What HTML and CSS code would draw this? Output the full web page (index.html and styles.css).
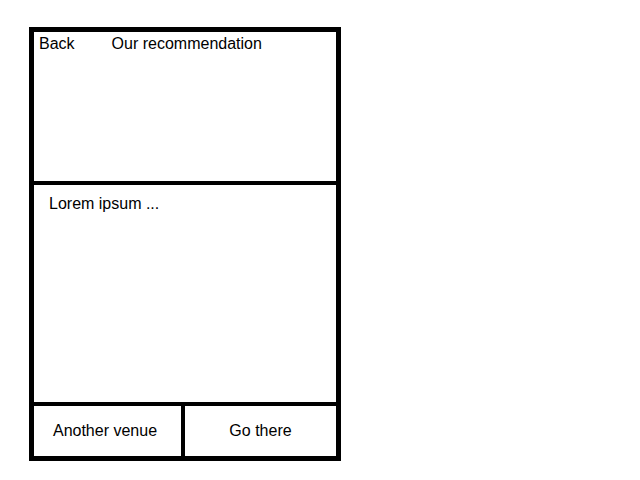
FILE: index.html
```html
<!DOCTYPE html>
<html lang="en">

<head>
    <meta charset="UTF-8">
    <meta name="viewport" content="width=device-width, initial-scale=1.0">
    <title>Our recommendation</title>
    <link rel="stylesheet" href="styles.css">
</head>

<body>
    <div class="screen">
        <div class="header">
            <span class="back">Back</span>
            <span class="title">Our recommendation</span>
        </div>
        <div class="content">Lorem ipsum ...</div>
        <div class="actions">
            <div class="action action-other">Another venue</div>
            <div class="action action-go">Go there</div>
        </div>
    </div>
</body>

</html>
```

FILE: styles.css
```css
* {
    box-sizing: border-box;
}

body {
    margin: 0;
    font-family: "Liberation Sans", Arial, sans-serif;
    font-size: 16px;
    color: #000;
    background: #fff;
}

.screen {
    width: 312px;
    height: 434px;
    margin: 27px 0 0 29px;
    border: 5px solid #000;
    display: flex;
    flex-direction: column;
}

.header {
    height: 153px;
    padding: 3px 5px;
    border-bottom: 4px solid #000;
    display: flex;
    align-items: flex-start;
}

.title {
    margin-left: 37px;
}

.content {
    flex: 1;
    padding: 10px 15px;
    border-bottom: 4px solid #000;
}

.actions {
    height: 50px;
    display: flex;
}

.action {
    display: flex;
    align-items: center;
    justify-content: center;
}

.action-other {
    width: 151px;
    padding-right: 5px;
    border-right: 4px solid #000;
}

.action-go {
    flex: 1;
}
```
